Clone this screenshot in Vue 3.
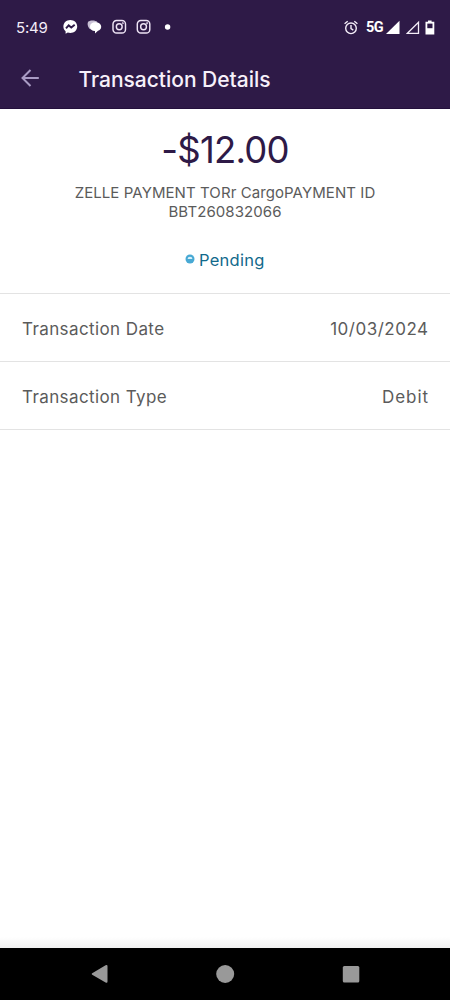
<script setup>
const rows = [
  { label: 'Transaction Date', value: '10/03/2024', kind: 'date' },
  { label: 'Transaction Type', value: 'Debit', kind: 'type' },
]
</script>

<template>
  <div class="screen">
    <header class="top">
      <div class="status">
        <span class="time">5:49</span>
        <svg class="notif" width="112" height="16" viewBox="0 0 112 16">
          <path d="M7.3 1C3.4 1 .4 3.8.4 7.5c0 2 .8 3.6 2.2 4.8v2.4l2.2-1.1c.8.2 1.6.4 2.5.4 3.9 0 6.9-2.8 6.9-6.5S11.200 1 7.300 1z" fill="#fff" />
          <path d="M3 9.400 5.700 6.400 8.300 8.500 11.700 5.800" fill="none" stroke="#2e1a47" stroke-width="1.900" />
          <path d="M25.300 2.600c2-1.600 7.500-1.500 9 .4l-5.500 5-1.300 2.600c-2.600-2-3.700-5.700-2.200-8z" fill="#c9c1d5" />
          <path d="M32.300 3.300c3.600 0 5.900 1.900 5.900 4.400 0 2-1.300 3.500-3.200 4.100L32 14.500V12c-3.200-.2-5-1.700-5-4.300s2-4.400 5.300-4.400z" fill="#fff" />
          <g v-for="x in [49.300, 73.600]" :key="x" :transform="`translate(${x} .8)`" fill="none" stroke="#eee4f5" stroke-width="1.450">
            <rect x=".7" y=".7" width="12.500" height="12.500" rx="3.600" />
            <circle cx="6.950" cy="6.950" r="2.900" />
            <circle cx="10.500" cy="3.500" r=".3" />
          </g>
          <circle cx="104.600" cy="8" r="2.700" fill="#fff" />
        </svg>
        <div class="signals">
          <svg width="14" height="15" viewBox="0 0 14 15" fill="none" stroke="#f4edf8" stroke-width="1.400">
            <circle cx="7" cy="8.300" r="5.300" />
            <path d="M7 5v3.600l2.300 1.500M.6 3.700 3.700 1.200M10.300 1.200l3.100 2.500" />
          </svg>
          <span class="network">5G</span>
          <svg class="bars" width="49" height="15" viewBox="0 0 49 15">
            <path d="M0 14 13.500.7V14z" fill="#fff" />
            <path d="M21.400 13.300 32.500 2.300v11z" fill="none" stroke="#f4edf8" stroke-width="1.300" />
            <path d="M39.500 1.800H42V.4h3.600v1.400h2.700v12.700h-8.800z" fill="#fff" />
            <path d="M41.300 3.600h5.200v4.600h-5.200z" fill="#2e1a47" />
          </svg>
        </div>
      </div>
      <div class="bar">
        <svg class="back" width="18" height="18" viewBox="0 0 18 18" fill="none" stroke="#a99bc4" stroke-width="2">
          <path d="M17.800 9H1.800M9.500 1 1.500 9l8 8" />
        </svg>
        <h1>Transaction Details</h1>
      </div>
    </header>

    <section class="summary">
      <div class="amount">-$12.00</div>
      <p class="description">
        <span>ZELLE PAYMENT TORr CargoPAYMENT ID</span>
        <span>BBT260832066</span>
      </p>
      <div class="pending">
        <svg width="10" height="10" viewBox="0 0 10 10">
          <circle cx="5" cy="5" r="4.500" fill="#48a9d4" />
          <path d="M2.600 4.900a2.400 2.200 0 0 1 4.800 0z" fill="#d8f0f9" />
        </svg>
        <span>Pending</span>
      </div>
    </section>

    <div v-for="row in rows" :key="row.label" class="row">
      <span class="label">{{ row.label }}</span>
      <span :class="['value', row.kind]">{{ row.value }}</span>
    </div>

    <div class="blank"></div>
    <nav class="nav">
      <svg width="450" height="52" viewBox="0 0 450 52" fill="#999">
        <path d="M92.200 25.200 105.600 17.300q1.900-1 1.900 1v15.100q0 2-1.900 1L92.200 26.800q-1.200-.8 0-1.600z" />
        <circle cx="225.200" cy="26" r="9" />
        <rect x="342.800" y="18" width="16.500" height="16.500" rx="1.500" />
      </svg>
    </nav>
  </div>
</template>

<style>
body {
  margin: 0;
}
</style>

<style scoped>
.screen {
  display: flex;
  flex-direction: column;
  width: 450px;
  height: 1000px;
  overflow: hidden;
  background: #fff;
  font-family: Inter, "Liberation Sans", sans-serif;
  color: #5b5b5b;
}
.screen span,
h1,
.amount {
  white-space: nowrap;
}
.top {
  box-sizing: border-box;
  height: 109px;
  background: #2e1a47;
  border-bottom: 1px solid #24103c;
  color: #fff;
}
.status {
  display: flex;
  align-items: center;
  height: 54px;
  padding: 0 15px 0 16px;
}
.time {
  width: 47px;
  font-size: 15px;
  letter-spacing: -0.200px;
  color: #f4edf8;
}
.signals {
  display: flex;
  align-items: center;
  margin-left: auto;
}
.signals > svg:first-child {
  margin-right: 8px;
}
.network {
  width: 20px;
  font-family: Roboto, sans-serif;
  font-size: 14.500px;
  font-weight: 700;
  letter-spacing: -0.500px;
}
.bar {
  display: flex;
  align-items: center;
  height: 48px;
  padding-left: 21px;
}
.back {
  margin-right: 39.500px;
}
h1 {
  margin: 3px 0 0;
  font-size: 21px;
  line-height: 28px;
  font-weight: 500;
  letter-spacing: -0.020px;
  color: #f7f0fa;
}
.summary {
  box-sizing: border-box;
  display: flex;
  flex-direction: column;
  align-items: center;
  height: 185px;
  padding-top: 21px;
  border-bottom: 1px solid #e3e3e3;
}
.amount {
  font-size: 36.500px;
  line-height: 40px;
  letter-spacing: -0.800px;
  color: #2e1a47;
}
.description {
  display: flex;
  flex-direction: column;
  align-items: center;
  margin: 13px 0 0;
  font-size: 15px;
  line-height: 19px;
  letter-spacing: 0.080px;
}
.pending {
  display: flex;
  align-items: center;
  gap: 3.500px;
  margin-top: 28px;
  font-size: 16.500px;
  line-height: 22px;
  letter-spacing: 0.250px;
  color: #126a8c;
}
.pending svg {
  margin-top: -2px;
}
.row {
  box-sizing: border-box;
  display: flex;
  align-items: center;
  justify-content: space-between;
  height: 68px;
  padding: 2px 22px 0;
  border-bottom: 1px solid #e3e3e3;
  font-size: 17px;
}
.label {
  letter-spacing: 0.400px;
}
.value.date {
  margin-right: -0.500px;
  letter-spacing: 0.500px;
}
.value.type {
  margin-right: -0.900px;
  letter-spacing: 0.900px;
}
.blank {
  flex: 1;
  background: linear-gradient(#fff, #f1f1f1) bottom / 100% 11px no-repeat;
}
.nav {
  height: 52px;
  background: #000;
}
.nav svg {
  display: block;
}
</style>
